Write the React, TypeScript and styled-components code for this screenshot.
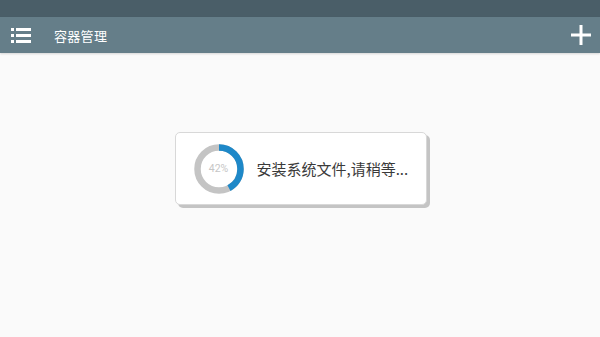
import styled, { createGlobalStyle } from "styled-components";

const Global = createGlobalStyle`
  html, body { margin: 0; padding: 0; }
  body {
    width: 600px;
    height: 337px;
    overflow: hidden;
    background: #fafafa;
    font-family: "Noto Sans CJK SC", "Noto Sans", sans-serif;
  }
`;

const Page = styled.div`
  width: 600px;
  height: 337px;
  display: flex;
  flex-direction: column;
  background: #fafafa;
`;

const StatusBar = styled.div`
  height: 17px;
  background: #4a5e68;
`;

const Toolbar = styled.div`
  height: 36px;
  background: #657e89;
  display: flex;
  align-items: center;
  padding: 0 9px 0 11px;
  box-shadow: 0 1px 2px rgba(0, 0, 0, 0.15);
`;

const Title = styled.div`
  color: #ffffff;
  font-size: 13px;
  margin-left: 23px;
  flex: 1;
  letter-spacing: 0.3px;
`;

const Body = styled.div`
  flex: 1;
  display: flex;
  justify-content: center;
  padding-top: 79px;
  padding-left: 1px;
`;

const Card = styled.div`
  width: 252px;
  height: 73px;
  box-sizing: border-box;
  background: #ffffff;
  border: 1px solid #d8d8d8;
  border-radius: 5px;
  box-shadow: 3px 3px 0 #c4c4c4;
  display: flex;
  align-items: center;
  padding-left: 18px;
`;

const Ring = styled.div`
  position: relative;
  width: 50px;
  height: 50px;
  flex-shrink: 0;
`;

const RingLabel = styled.span`
  position: absolute;
  inset: 0;
  display: flex;
  align-items: center;
  justify-content: center;
  font-family: "Roboto", "Liberation Sans", sans-serif;
  font-size: 10.5px;
  color: #c6c6c6;
`;

const Message = styled.div`
  margin-left: 13px;
  font-size: 15px;
  color: #3a3a3a;
  white-space: nowrap;
`;

const IconBtn = styled.div`
  display: flex;
  align-items: center;
`;

const MenuIcon = () => (
  <svg width="20" height="17" viewBox="0 0 20 17">
    <rect x="0" y="1" width="3" height="3" fill="#fff" />
    <rect x="5" y="1" width="15" height="3" fill="#fff" />
    <rect x="0" y="7" width="3" height="3" fill="#fff" />
    <rect x="5" y="7" width="15" height="3" fill="#fff" />
    <rect x="0" y="13" width="3" height="3" fill="#fff" />
    <rect x="5" y="13" width="15" height="3" fill="#fff" />
  </svg>
);

const PlusIcon = () => (
  <svg width="20" height="20" viewBox="0 0 20 20">
    <rect x="8.5" y="0" width="3" height="20" fill="#fff" />
    <rect x="0" y="8.5" width="20" height="3" fill="#fff" />
  </svg>
);

const percent = 42;

const Progress = () => {
  const r = 21.5;
  const c = 2 * Math.PI * r;
  return (
    <Ring>
      <svg width="50" height="50" viewBox="0 0 50 50">
        <circle cx="25" cy="25" r={r} fill="none" stroke="#c4c4c4" strokeWidth="6.5" />
        <circle
          cx="25"
          cy="25"
          r={r}
          fill="none"
          stroke="#1e88c8"
          strokeWidth="6.5"
          strokeDasharray={`${(c * percent) / 100} ${c}`}
          transform="rotate(-90 25 25)"
        />
      </svg>
      <RingLabel>{percent}%</RingLabel>
    </Ring>
  );
};

export default function App() {
  return (
    <>
      <Global />
      <Page>
        <StatusBar />
        <Toolbar>
          <IconBtn>
            <MenuIcon />
          </IconBtn>
          <Title>容器管理</Title>
          <IconBtn>
            <PlusIcon />
          </IconBtn>
        </Toolbar>
        <Body>
          <Card>
            <Progress />
            <Message>安装系统文件,请稍等...</Message>
          </Card>
        </Body>
      </Page>
    </>
  );
}
